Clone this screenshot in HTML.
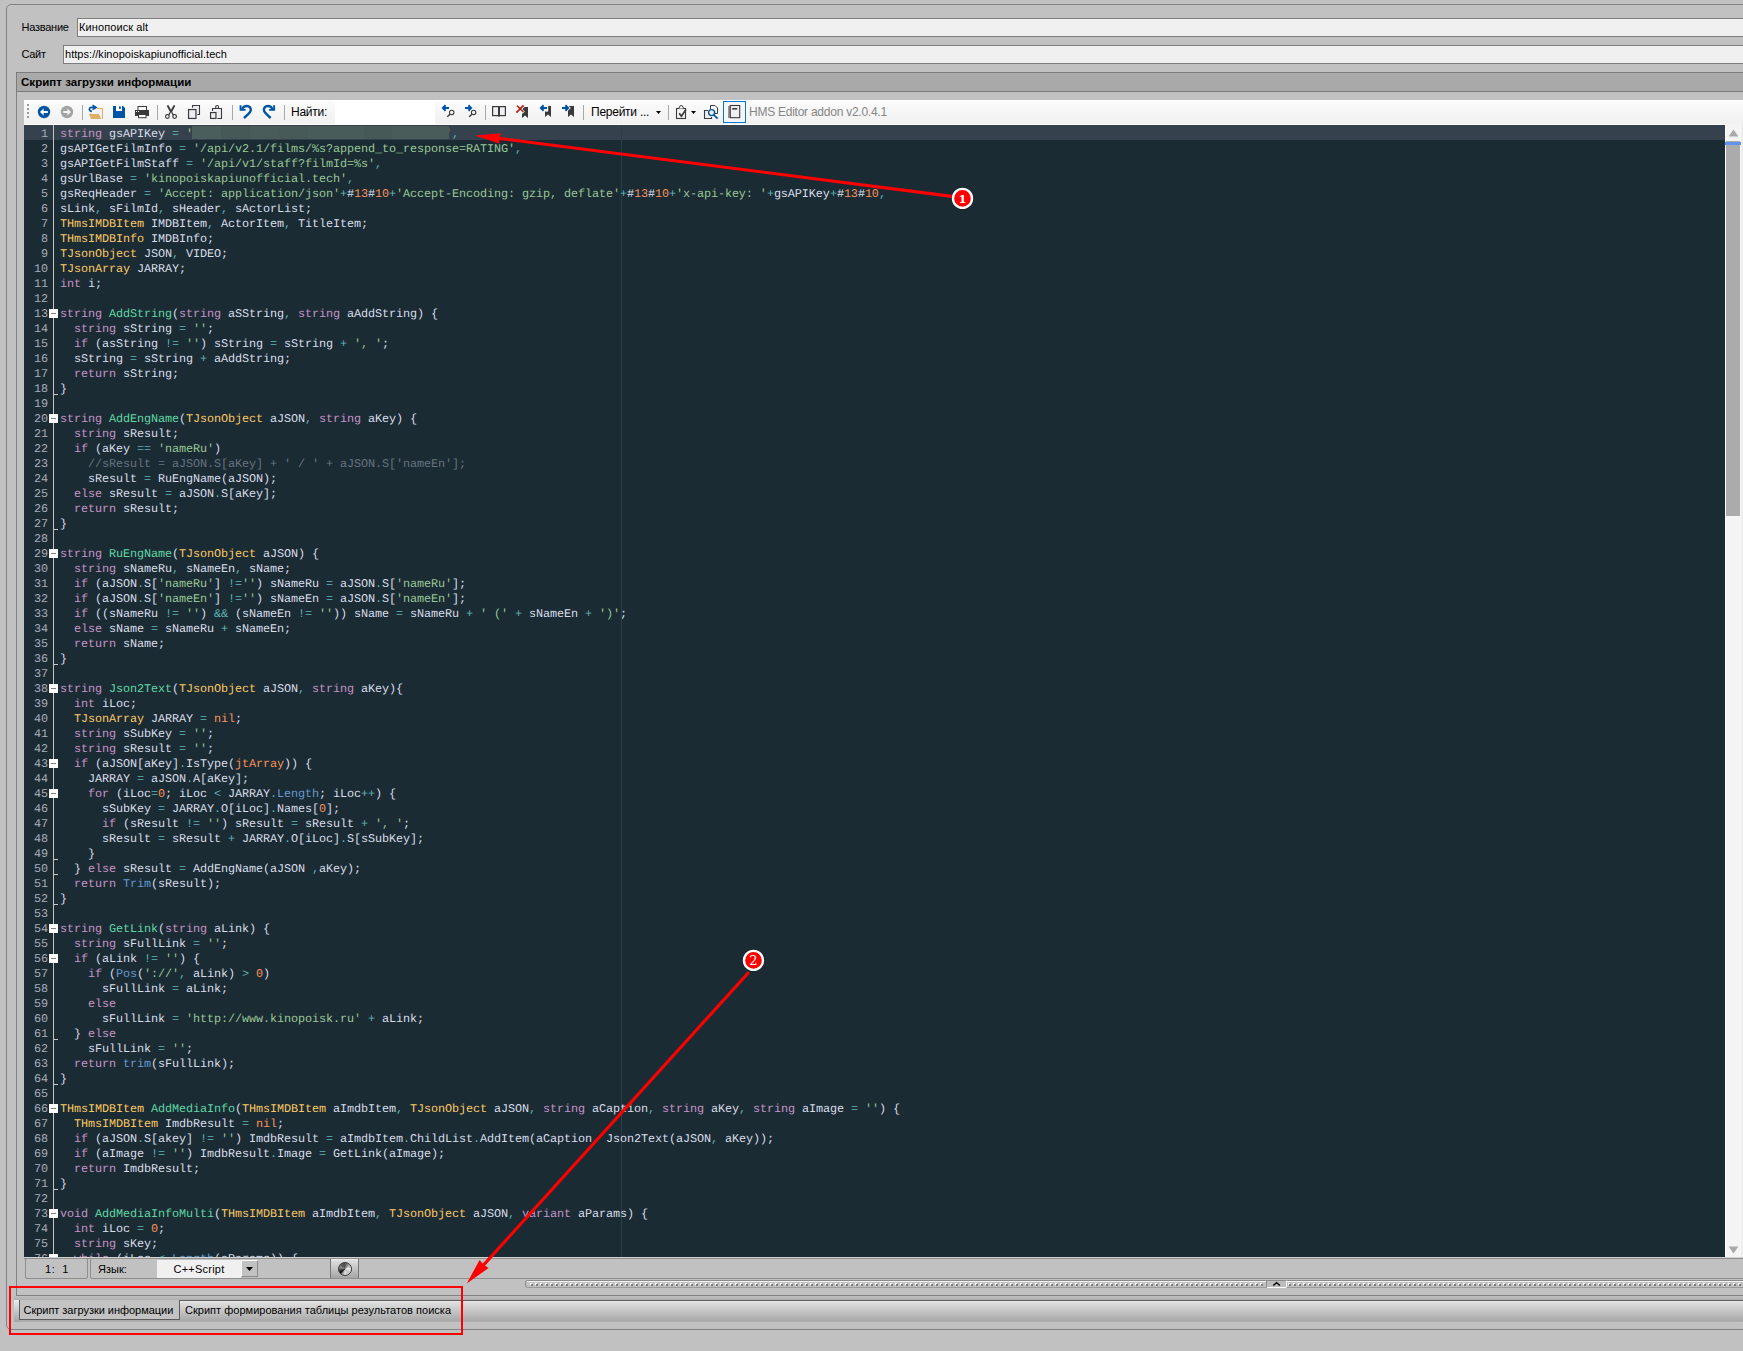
<!DOCTYPE html>
<html lang="ru"><head><meta charset="utf-8"><title>HMS Editor</title>
<style>
html,body{margin:0;padding:0}
body{width:1743px;height:1351px;background:#c1c1c1;position:relative;overflow:hidden;font-family:"Liberation Sans",sans-serif;font-size:11px;color:#000;line-height:13px}
div,span,i,svg{box-sizing:border-box}
.a{position:absolute;white-space:pre}
i{font-style:normal}
.ui{font-size:11px;line-height:13px;color:#000}
.tb{font-size:12px;line-height:14px;color:#000;letter-spacing:-0.25px}
#ed{text-rendering:geometricPrecision;position:absolute;left:24px;top:125px;width:1701px;height:1132px;background:#1b2b34;overflow:hidden;font-family:"Liberation Mono",monospace;font-size:11.8px;letter-spacing:-0.0812px;line-height:15px;color:#d8dee9}
#ed .l{position:absolute;left:36px;height:15px;white-space:pre}
#ed .g{position:absolute;left:0;width:24px;height:15px;text-align:right;color:#a7adba;white-space:pre}
.k{color:#c594c5}.s{color:#99c794}.n{color:#f99157}.o{color:#5fb3b3}.t{color:#fac863}.f{color:#5fd7a5}.b{color:#6699cc}.c{color:#65737e}
.fb{position:absolute;left:25px;width:9px;height:9px;background:#fff}
.fb:after{content:"";position:absolute;left:2px;top:4px;width:5px;height:1px;background:#808080}
.fe{position:absolute;left:30px;width:4px;height:1px;background:#c8c8c8}
</style></head><body>

<div class="a" style="left:6px;top:4px;width:1800px;height:1326px;border:1px solid #828282;border-radius:5px"></div>
<div class="a ui" style="left:21.5px;top:21px;letter-spacing:-0.25px">Название</div>
<div class="a ui" style="left:77px;top:18px;width:1800px;height:19px;background:#f0f0f0;border:1px solid #7e7e7e;padding:2px 0 0 1px;letter-spacing:0.1px">Кинопоиск alt</div>
<div class="a ui" style="left:21.5px;top:48px;letter-spacing:-0.3px">Сайт</div>
<div class="a ui" style="left:63px;top:45px;width:1800px;height:19px;background:#f0f0f0;border:1px solid #7e7e7e;padding:2px 0 0 1px;letter-spacing:0.04px">https://kinopoiskapiunofficial.tech</div>
<div class="a" style="left:16px;top:72px;width:1800px;height:1224px;border:1px solid #808080"></div>
<div class="a" style="left:16px;top:72px;width:1800px;height:20px;background:#a9a9a9;border:1px solid #7c7c7c;font-weight:bold;font-size:11.5px;line-height:14px;padding:2px 0 0 4px;letter-spacing:0.04px">Скрипт загрузки информации</div>
<div class="a" style="left:24px;top:100px;width:1719px;height:25px;background:linear-gradient(#ffffff 0,#fbfbfb 2px,#f1f1f1 23px,#f1f1f1 24px,#ffffff 24px)"></div>
<div class="a" style="left:335px;top:100px;width:100px;height:24px;background:#fff"></div>
<div class="a tb" style="left:291px;top:105px">Найти:</div>
<div class="a tb" style="left:591px;top:105px">Перейти ...</div>
<div class="a tb" style="left:749px;top:105px;color:#858585">HMS Editor addon v2.0.4.1</div>
<div id="ed">
<div class="a" style="left:0;top:0;width:1701px;height:15px;background:#35424d"></div>
<div class="a" style="z-index:2;left:168px;top:1px;width:257px;height:13px;background:linear-gradient(90deg,#4a5e5b 0,#4a5e5b 29px,#465956 29px,#465956 58px,#495c59 58px,#495c59 87px,#475a58 87px,#475a58 116px,#485c59 116px,#485c59 172px,#465957 172px,#465957 200px,#495c5a 200px,#495c5a 257px)"></div>
<div class="a" style="left:597px;top:0;width:1px;height:1132px;background:#2c3d47"></div>
<div class="a" style="left:29px;top:0;width:1px;height:1132px;background:#c4c4c4"></div>
<div class="g" style="top:2px">1</div>
<div class="l" style="top:2px"><i class="k">string</i> gsAPIKey <i class="o">=</i> <i class="s">'                                    '</i><i class="o">,</i></div>
<div class="g" style="top:17px">2</div>
<div class="l" style="top:17px">gsAPIGetFilmInfo <i class="o">=</i> <i class="s">'/api/v2.1/films/%s?append_to_response=RATING'</i><i class="o">,</i></div>
<div class="g" style="top:32px">3</div>
<div class="l" style="top:32px">gsAPIGetFilmStaff <i class="o">=</i> <i class="s">'/api/v1/staff?filmId=%s'</i><i class="o">,</i></div>
<div class="g" style="top:47px">4</div>
<div class="l" style="top:47px">gsUrlBase <i class="o">=</i> <i class="s">'kinopoiskapiunofficial.tech'</i><i class="o">,</i></div>
<div class="g" style="top:62px">5</div>
<div class="l" style="top:62px">gsReqHeader <i class="o">=</i> <i class="s">'Accept: application/json'</i><i class="o">+</i>#<i class="n">13</i>#<i class="n">10</i><i class="o">+</i><i class="s">'Accept-Encoding: gzip, deflate'</i><i class="o">+</i>#<i class="n">13</i>#<i class="n">10</i><i class="o">+</i><i class="s">'x-api-key: '</i><i class="o">+</i>gsAPIKey<i class="o">+</i>#<i class="n">13</i>#<i class="n">10</i><i class="o">,</i></div>
<div class="g" style="top:77px">6</div>
<div class="l" style="top:77px">sLink<i class="o">,</i> sFilmId<i class="o">,</i> sHeader<i class="o">,</i> sActorList;</div>
<div class="g" style="top:92px">7</div>
<div class="l" style="top:92px"><i class="t">THmsIMDBItem</i> IMDBItem<i class="o">,</i> ActorItem<i class="o">,</i> TitleItem;</div>
<div class="g" style="top:107px">8</div>
<div class="l" style="top:107px"><i class="t">THmsIMDBInfo</i> IMDBInfo;</div>
<div class="g" style="top:122px">9</div>
<div class="l" style="top:122px"><i class="t">TJsonObject</i> JSON<i class="o">,</i> VIDEO;</div>
<div class="g" style="top:137px">10</div>
<div class="l" style="top:137px"><i class="t">TJsonArray</i> JARRAY;</div>
<div class="g" style="top:152px">11</div>
<div class="l" style="top:152px"><i class="k">int</i> i;</div>
<div class="g" style="top:167px">12</div>
<div class="g" style="top:182px">13</div>
<div class="l" style="top:182px"><i class="k">string</i> <i class="f">AddString</i>(<i class="k">string</i> aSString<i class="o">,</i> <i class="k">string</i> aAddString) {</div>
<div class="fb" style="top:184px"></div>
<div class="g" style="top:197px">14</div>
<div class="l" style="top:197px">  <i class="k">string</i> sString <i class="o">=</i> <i class="s">''</i>;</div>
<div class="g" style="top:212px">15</div>
<div class="l" style="top:212px">  <i class="k">if</i> (asString <i class="o">!=</i> <i class="s">''</i>) sString <i class="o">=</i> sString <i class="o">+</i> <i class="s">', '</i>;</div>
<div class="g" style="top:227px">16</div>
<div class="l" style="top:227px">  sString <i class="o">=</i> sString <i class="o">+</i> aAddString;</div>
<div class="g" style="top:242px">17</div>
<div class="l" style="top:242px">  <i class="k">return</i> sString;</div>
<div class="g" style="top:257px">18</div>
<div class="l" style="top:257px">}</div>
<div class="fe" style="top:269px"></div>
<div class="g" style="top:272px">19</div>
<div class="g" style="top:287px">20</div>
<div class="l" style="top:287px"><i class="k">string</i> <i class="f">AddEngName</i>(<i class="t">TJsonObject</i> aJSON<i class="o">,</i> <i class="k">string</i> aKey) {</div>
<div class="fb" style="top:289px"></div>
<div class="g" style="top:302px">21</div>
<div class="l" style="top:302px">  <i class="k">string</i> sResult;</div>
<div class="g" style="top:317px">22</div>
<div class="l" style="top:317px">  <i class="k">if</i> (aKey <i class="o">==</i> <i class="s">'nameRu'</i>)</div>
<div class="g" style="top:332px">23</div>
<div class="l" style="top:332px">    <i class="c">//sResult = aJSON.S[aKey] + ' / ' + aJSON.S['nameEn'];</i></div>
<div class="g" style="top:347px">24</div>
<div class="l" style="top:347px">    sResult <i class="o">=</i> RuEngName(aJSON);</div>
<div class="g" style="top:362px">25</div>
<div class="l" style="top:362px">  <i class="k">else</i> sResult <i class="o">=</i> aJSON<i class="o">.</i>S[aKey];</div>
<div class="g" style="top:377px">26</div>
<div class="l" style="top:377px">  <i class="k">return</i> sResult;</div>
<div class="g" style="top:392px">27</div>
<div class="l" style="top:392px">}</div>
<div class="fe" style="top:404px"></div>
<div class="g" style="top:407px">28</div>
<div class="g" style="top:422px">29</div>
<div class="l" style="top:422px"><i class="k">string</i> <i class="f">RuEngName</i>(<i class="t">TJsonObject</i> aJSON) {</div>
<div class="fb" style="top:424px"></div>
<div class="g" style="top:437px">30</div>
<div class="l" style="top:437px">  <i class="k">string</i> sNameRu<i class="o">,</i> sNameEn<i class="o">,</i> sName;</div>
<div class="g" style="top:452px">31</div>
<div class="l" style="top:452px">  <i class="k">if</i> (aJSON<i class="o">.</i>S[<i class="s">'nameRu'</i>] <i class="o">!=</i><i class="s">''</i>) sNameRu <i class="o">=</i> aJSON<i class="o">.</i>S[<i class="s">'nameRu'</i>];</div>
<div class="g" style="top:467px">32</div>
<div class="l" style="top:467px">  <i class="k">if</i> (aJSON<i class="o">.</i>S[<i class="s">'nameEn'</i>] <i class="o">!=</i><i class="s">''</i>) sNameEn <i class="o">=</i> aJSON<i class="o">.</i>S[<i class="s">'nameEn'</i>];</div>
<div class="g" style="top:482px">33</div>
<div class="l" style="top:482px">  <i class="k">if</i> ((sNameRu <i class="o">!=</i> <i class="s">''</i>) <i class="o">&amp;&amp;</i> (sNameEn <i class="o">!=</i> <i class="s">''</i>)) sName <i class="o">=</i> sNameRu <i class="o">+</i> <i class="s">' ('</i> <i class="o">+</i> sNameEn <i class="o">+</i> <i class="s">')'</i>;</div>
<div class="g" style="top:497px">34</div>
<div class="l" style="top:497px">  <i class="k">else</i> sName <i class="o">=</i> sNameRu <i class="o">+</i> sNameEn;</div>
<div class="g" style="top:512px">35</div>
<div class="l" style="top:512px">  <i class="k">return</i> sName;</div>
<div class="g" style="top:527px">36</div>
<div class="l" style="top:527px">}</div>
<div class="fe" style="top:539px"></div>
<div class="g" style="top:542px">37</div>
<div class="g" style="top:557px">38</div>
<div class="l" style="top:557px"><i class="k">string</i> <i class="f">Json2Text</i>(<i class="t">TJsonObject</i> aJSON<i class="o">,</i> <i class="k">string</i> aKey){</div>
<div class="fb" style="top:559px"></div>
<div class="g" style="top:572px">39</div>
<div class="l" style="top:572px">  <i class="k">int</i> iLoc;</div>
<div class="g" style="top:587px">40</div>
<div class="l" style="top:587px">  <i class="t">TJsonArray</i> JARRAY <i class="o">=</i> <i class="n">nil</i>;</div>
<div class="g" style="top:602px">41</div>
<div class="l" style="top:602px">  <i class="k">string</i> sSubKey <i class="o">=</i> <i class="s">''</i>;</div>
<div class="g" style="top:617px">42</div>
<div class="l" style="top:617px">  <i class="k">string</i> sResult <i class="o">=</i> <i class="s">''</i>;</div>
<div class="g" style="top:632px">43</div>
<div class="l" style="top:632px">  <i class="k">if</i> (aJSON[aKey]<i class="o">.</i>IsType(<i class="n">jtArray</i>)) {</div>
<div class="fb" style="top:634px"></div>
<div class="g" style="top:647px">44</div>
<div class="l" style="top:647px">    JARRAY <i class="o">=</i> aJSON<i class="o">.</i>A[aKey];</div>
<div class="g" style="top:662px">45</div>
<div class="l" style="top:662px">    <i class="k">for</i> (iLoc<i class="o">=</i><i class="n">0</i>; iLoc <i class="o">&lt;</i> JARRAY<i class="o">.</i><i class="b">Length</i>; iLoc<i class="o">++</i>) {</div>
<div class="fb" style="top:664px"></div>
<div class="g" style="top:677px">46</div>
<div class="l" style="top:677px">      sSubKey <i class="o">=</i> JARRAY<i class="o">.</i>O[iLoc]<i class="o">.</i>Names[<i class="n">0</i>];</div>
<div class="g" style="top:692px">47</div>
<div class="l" style="top:692px">      <i class="k">if</i> (sResult <i class="o">!=</i> <i class="s">''</i>) sResult <i class="o">=</i> sResult <i class="o">+</i> <i class="s">', '</i>;</div>
<div class="g" style="top:707px">48</div>
<div class="l" style="top:707px">      sResult <i class="o">=</i> sResult <i class="o">+</i> JARRAY<i class="o">.</i>O[iLoc]<i class="o">.</i>S[sSubKey];</div>
<div class="g" style="top:722px">49</div>
<div class="l" style="top:722px">    }</div>
<div class="fe" style="top:734px"></div>
<div class="g" style="top:737px">50</div>
<div class="l" style="top:737px">  } <i class="k">else</i> sResult <i class="o">=</i> AddEngName(aJSON <i class="o">,</i>aKey);</div>
<div class="fe" style="top:749px"></div>
<div class="g" style="top:752px">51</div>
<div class="l" style="top:752px">  <i class="k">return</i> <i class="b">Trim</i>(sResult);</div>
<div class="g" style="top:767px">52</div>
<div class="l" style="top:767px">}</div>
<div class="fe" style="top:779px"></div>
<div class="g" style="top:782px">53</div>
<div class="g" style="top:797px">54</div>
<div class="l" style="top:797px"><i class="k">string</i> <i class="f">GetLink</i>(<i class="k">string</i> aLink) {</div>
<div class="fb" style="top:799px"></div>
<div class="g" style="top:812px">55</div>
<div class="l" style="top:812px">  <i class="k">string</i> sFullLink <i class="o">=</i> <i class="s">''</i>;</div>
<div class="g" style="top:827px">56</div>
<div class="l" style="top:827px">  <i class="k">if</i> (aLink <i class="o">!=</i> <i class="s">''</i>) {</div>
<div class="fb" style="top:829px"></div>
<div class="g" style="top:842px">57</div>
<div class="l" style="top:842px">    <i class="k">if</i> (<i class="b">Pos</i>(<i class="s">'://'</i><i class="o">,</i> aLink) <i class="o">&gt;</i> <i class="n">0</i>)</div>
<div class="g" style="top:857px">58</div>
<div class="l" style="top:857px">      sFullLink <i class="o">=</i> aLink;</div>
<div class="g" style="top:872px">59</div>
<div class="l" style="top:872px">    <i class="k">else</i></div>
<div class="g" style="top:887px">60</div>
<div class="l" style="top:887px">      sFullLink <i class="o">=</i> <i class="s">'http://www.kinopoisk.ru'</i> <i class="o">+</i> aLink;</div>
<div class="g" style="top:902px">61</div>
<div class="l" style="top:902px">  } <i class="k">else</i></div>
<div class="fe" style="top:914px"></div>
<div class="g" style="top:917px">62</div>
<div class="l" style="top:917px">    sFullLink <i class="o">=</i> <i class="s">''</i>;</div>
<div class="g" style="top:932px">63</div>
<div class="l" style="top:932px">  <i class="k">return</i> <i class="b">trim</i>(sFullLink);</div>
<div class="g" style="top:947px">64</div>
<div class="l" style="top:947px">}</div>
<div class="fe" style="top:959px"></div>
<div class="g" style="top:962px">65</div>
<div class="g" style="top:977px">66</div>
<div class="l" style="top:977px"><i class="t">THmsIMDBItem</i> <i class="f">AddMediaInfo</i>(<i class="t">THmsIMDBItem</i> aImdbItem<i class="o">,</i> <i class="t">TJsonObject</i> aJSON<i class="o">,</i> <i class="k">string</i> aCaption<i class="o">,</i> <i class="k">string</i> aKey<i class="o">,</i> <i class="k">string</i> aImage <i class="o">=</i> <i class="s">''</i>) {</div>
<div class="fb" style="top:979px"></div>
<div class="g" style="top:992px">67</div>
<div class="l" style="top:992px">  <i class="t">THmsIMDBItem</i> ImdbResult <i class="o">=</i> <i class="n">nil</i>;</div>
<div class="g" style="top:1007px">68</div>
<div class="l" style="top:1007px">  <i class="k">if</i> (aJSON<i class="o">.</i>S[akey] <i class="o">!=</i> <i class="s">''</i>) ImdbResult <i class="o">=</i> aImdbItem<i class="o">.</i>ChildList<i class="o">.</i>AddItem(aCaption<i class="o">,</i> Json2Text(aJSON<i class="o">,</i> aKey));</div>
<div class="g" style="top:1022px">69</div>
<div class="l" style="top:1022px">  <i class="k">if</i> (aImage <i class="o">!=</i> <i class="s">''</i>) ImdbResult<i class="o">.</i>Image <i class="o">=</i> GetLink(aImage);</div>
<div class="g" style="top:1037px">70</div>
<div class="l" style="top:1037px">  <i class="k">return</i> ImdbResult;</div>
<div class="g" style="top:1052px">71</div>
<div class="l" style="top:1052px">}</div>
<div class="fe" style="top:1064px"></div>
<div class="g" style="top:1067px">72</div>
<div class="g" style="top:1082px">73</div>
<div class="l" style="top:1082px"><i class="k">void</i> <i class="f">AddMediaInfoMulti</i>(<i class="t">THmsIMDBItem</i> aImdbItem<i class="o">,</i> <i class="t">TJsonObject</i> aJSON<i class="o">,</i> <i class="k">variant</i> aParams) {</div>
<div class="fb" style="top:1084px"></div>
<div class="g" style="top:1097px">74</div>
<div class="l" style="top:1097px">  <i class="k">int</i> iLoc <i class="o">=</i> <i class="n">0</i>;</div>
<div class="g" style="top:1112px">75</div>
<div class="l" style="top:1112px">  <i class="k">string</i> sKey;</div>
<div class="g" style="top:1127px">76</div>
<div class="l" style="top:1127px">  <i class="k">while</i> (iLoc <i class="o">&lt;</i> <i class="b">Length</i>(aParams)) {</div>
<div class="fb" style="top:1129px"></div>
</div>
<div class="a" style="left:1725px;top:124px;width:18px;height:1133px;background:linear-gradient(90deg,#fff 0,#fff 1px,#f4f4f4 1px,#f4f4f4 15px,#f8f8f8 15px,#f8f8f8 16px,#eee 16px)"></div>
<div class="a" style="left:1726px;top:141px;width:14px;height:375px;background:#ababab"></div>
<div class="a" style="left:1725px;top:142px;width:16px;height:3px;background:#6495ed"></div>
<div class="a" style="left:24px;top:1257px;width:1800px;height:1px;background:#d2d2d2"></div>
<div class="a" style="left:24px;top:1258px;width:1800px;height:1px;background:#8a8a8a"></div>
<div class="a ui" style="left:25px;top:1258px;width:63px;height:21px;border:1px solid #8e8e8e;border-radius:2px;text-align:center;padding:4px 0 0 1px;letter-spacing:0.5px">1:  1</div>
<div class="a" style="left:90px;top:1258px;width:1800px;height:21px;border:1px solid #8e8e8e;border-radius:2px 0 0 2px"></div>
<div class="a ui" style="left:98px;top:1263px">Язык:</div>
<div class="a ui" style="left:157px;top:1260px;width:84px;height:18px;background:#f0f0f0;text-align:center;padding-top:3px;letter-spacing:0.22px">C++Script</div>
<div class="a" style="left:241px;top:1260px;width:17px;height:17px;background:#c1c1c1;border:1px solid;border-color:#fff #8a8a8a #8a8a8a #fff"></div>
<div class="a" style="left:330px;top:1259px;width:29px;height:19px;background:linear-gradient(#ececec 0,#dcdcdc 2px,#a6a6a6 100%);border-left:1px solid #767676;border-right:1px solid #767676"></div>
<div class="a" style="left:338px;top:1262px;width:14px;height:14px;border-radius:50%;border:1px solid #3a3a3a;background:conic-gradient(from 0deg,#505050 0deg,#a8a8a8 45deg,#ececec 85deg,#c4c4c4 135deg,#dcdcdc 185deg,#8a8a8a 212deg,#0c0c0c 232deg,#3c3c3c 255deg,#8c8c8c 290deg,#5a5a5a 320deg,#505050 360deg)"></div>
<div class="a" style="left:525px;top:1280px;width:742px;height:8px;border:1px solid #8c8c8c;border-bottom-color:#9a9a9a;border-radius:3px 0 0 3px"></div>
<div class="a" style="left:527px;top:1281px;width:739px;height:1px;background:#f4f4f4"></div>
<div class="a" style="left:530px;top:1283px;width:733px;height:3px;background:linear-gradient(90deg,transparent 0,transparent 1px,#7c7c7c 1px,#7c7c7c 3px,transparent 3px) 0 1px/5px 2px repeat-x,linear-gradient(90deg,#fff 0,#fff 2px,transparent 2px) 0 0/5px 2px repeat-x"></div>
<div class="a" style="left:1267px;top:1280px;width:19px;height:8px;background:#bcbcbc;border-top:1px solid #8c8c8c;border-bottom:1px solid #fafafa"></div>
<div class="a" style="left:1286px;top:1280px;width:600px;height:8px;border-top:1px solid #8c8c8c;border-left:1px solid #fafafa;border-bottom:1px solid #9a9a9a"></div>
<div class="a" style="left:1286px;top:1281px;width:600px;height:1px;background:#f4f4f4"></div>
<div class="a" style="left:1288px;top:1283px;width:455px;height:3px;background:linear-gradient(90deg,transparent 0,transparent 1px,#7c7c7c 1px,#7c7c7c 3px,transparent 3px) 0 1px/5px 2px repeat-x,linear-gradient(90deg,#fff 0,#fff 2px,transparent 2px) 0 0/5px 2px repeat-x"></div>
<div class="a" style="left:14px;top:1296px;width:1800px;height:4px;background:linear-gradient(#c0c0c0,#aeaeae)"></div>
<div class="a" style="left:14px;top:1300px;width:1800px;height:22px;background:linear-gradient(#5e5e5e 0,#5e5e5e 1px,#f0f0f0 1px,#e0e0e0 2px,#c8c8c8 10px,#a8a8a8 21px,#b4b4b4 22px)"></div>
<div class="a" style="left:14px;top:1300px;width:6px;height:22px;background:linear-gradient(#ececec,#a4a4a4)"></div>
<div class="a ui" style="left:19px;top:1300px;width:161px;height:20px;background:#c3c3c3;border:1px solid #5c5c5c;border-top:0;padding:4px 0 0 3.5px;letter-spacing:-0.03px">Скрипт загрузки информации</div>
<div class="a ui" style="left:185px;top:1304px;letter-spacing:0.02px">Скрипт формирования таблицы результатов поиска</div>
<svg class="a" style="left:0;top:0" width="1743" height="1351" viewBox="0 0 1743 1351">
<rect x="27" y="104" width="2" height="2" fill="#9a9a9a"/>
<rect x="27" y="108" width="2" height="2" fill="#9a9a9a"/>
<rect x="27" y="112" width="2" height="2" fill="#9a9a9a"/>
<rect x="27" y="116" width="2" height="2" fill="#9a9a9a"/>
<rect x="82" y="105" width="1" height="15" fill="#a8a8a8"/>
<rect x="157" y="105" width="1" height="15" fill="#a8a8a8"/>
<rect x="232" y="105" width="1" height="15" fill="#a8a8a8"/>
<rect x="284" y="105" width="1" height="15" fill="#a8a8a8"/>
<rect x="485" y="105" width="1" height="15" fill="#a8a8a8"/>
<rect x="583" y="105" width="1" height="15" fill="#a8a8a8"/>
<rect x="668" y="105" width="1" height="15" fill="#a8a8a8"/>
<circle cx="44" cy="112" r="6.2" fill="#0054a6"/>
<path d="M40 112 L43.6 108.6 L43.6 111.1 L47.8 111.1 L47.8 112.9 L43.6 112.9 L43.6 115.4 Z" fill="#fff"/>
<circle cx="67" cy="112" r="6.2" fill="#a3a3a3"/>
<path d="M71 112 L67.4 108.6 L67.4 111.1 L63.2 111.1 L63.2 112.9 L67.4 112.9 L67.4 115.4 Z" fill="#f2f2f2"/>
<path d="M97 108.5 H102.5 V119" fill="none" stroke="#deb068" stroke-width="1"/>
<rect x="95" y="109" width="7" height="5" fill="#f0f0f5"/>
<path d="M89 114 H98.8 L101.3 119 H91 Z" fill="#deb068"/>
<path d="M91.9 111.4 C88.7 111 88.5 107.4 91.8 107.4 H95.4" fill="none" stroke="#0054a6" stroke-width="1.7"/>
<path d="M92.5 105.2 L96 107.4 L92.5 109.6" fill="none" stroke="#0054a6" stroke-width="1.7"/>
<path d="M90 114 L90.6 112.9 L91.4 114 Z" fill="#deb068"/>
<path d="M113 106 H123 L125 108 V118 H113 Z" fill="#0054a6"/>
<rect x="116" y="106" width="6" height="5" fill="#fff"/>
<rect x="119" y="106.4" width="1.8" height="2.5" fill="#0054a6"/>
<rect x="138" y="106.5" width="8.5" height="4" fill="#fff" stroke="#3a3a3a" stroke-width="1"/>
<rect x="135" y="110" width="14" height="6" fill="#3a3a3a"/>
<rect x="136" y="111" width="1" height="1" fill="#fff"/><rect x="138" y="111" width="1" height="1" fill="#fff"/>
<rect x="138.5" y="114.5" width="7.5" height="3.2" fill="#fff" stroke="#3a3a3a" stroke-width="1"/>
<path d="M167.5 105.4 L171 111.8 M174.5 105.4 L171 111.8" fill="none" stroke="#3a3a3a" stroke-width="1.9"/>
<path d="M171 111.4 L168.7 114.9 M171 111.4 L173.3 114.9" fill="none" stroke="#3a3a3a" stroke-width="1.3"/>
<circle cx="167.4" cy="116.5" r="1.85" fill="#fff" stroke="#3a3a3a" stroke-width="1.2"/><circle cx="174.6" cy="116.5" r="1.85" fill="#fff" stroke="#3a3a3a" stroke-width="1.2"/>
<rect x="170.6" y="112.6" width="0.9" height="0.9" fill="#fff"/>
<rect x="193" y="106" width="6" height="8" fill="#eeeef3"/>
<path d="M192.5 107.8 V105.5 H199.5 V114.5 H197.3" fill="none" stroke="#3a3a3a" stroke-width="1.1" stroke-linejoin="miter"/>
<rect x="188.55" y="109.55" width="7.4" height="8.9" fill="#eeeef3" stroke="#3a3a3a" stroke-width="1.2"/>
<rect x="213" y="109" width="8" height="9" fill="#eeeef3"/>
<path d="M212.5 111 V108.5 H221.5 V118.5 H217.4" fill="none" stroke="#3a3a3a" stroke-width="1.1" stroke-linejoin="miter"/>
<circle cx="217.1" cy="107" r="1.5" fill="#fff" stroke="#3a3a3a" stroke-width="1.1"/>
<rect x="210.55" y="112.55" width="5.4" height="5.9" fill="#eeeef3" stroke="#3a3a3a" stroke-width="1.2"/>
<g fill="none" stroke="#0054a6"><path d="M242 109 C243.6 106.8 246.4 105.6 248.6 106.4 C251 107.3 251.5 110.3 249.7 112.6 C248.4 114.2 246.4 116 244 118" stroke-width="2.4"/><path d="M240.55 105.2 V109.9 H245.6" stroke-width="1.9"/></g>
<g transform="translate(514.7 0) scale(-1 1)" fill="none" stroke="#0054a6"><path d="M242 109 C243.6 106.8 246.4 105.6 248.6 106.4 C251 107.3 251.5 110.3 249.7 112.6 C248.4 114.2 246.4 116 244 118" stroke-width="2.4"/><path d="M240.55 105.2 V109.9 H245.6" stroke-width="1.9"/></g>
<path d="M445.6 105.2 L442.9 108 L445.6 110.8" fill="none" stroke="#0054a6" stroke-width="2"/><path d="M443.6 108 H449" stroke="#0054a6" stroke-width="2"/>
<circle cx="451.7" cy="112.4" r="2.2" fill="#f8f8f8" stroke="#3a3a3a" stroke-width="1.1"/><path d="M450.0 114.2 L447.3 116.80000000000001" stroke="#3a3a3a" stroke-width="1.5"/>
<path d="M468.4 105.2 L471.1 108 L468.4 110.8" fill="none" stroke="#0054a6" stroke-width="2"/><path d="M465 108 H470.4" stroke="#0054a6" stroke-width="2"/>
<circle cx="473.6" cy="112.4" r="2.2" fill="#f8f8f8" stroke="#3a3a3a" stroke-width="1.1"/><path d="M471.90000000000003 114.2 L469.20000000000005 116.80000000000001" stroke="#3a3a3a" stroke-width="1.5"/>
<rect x="492.6" y="106.6" width="12.8" height="9" fill="#eeeef3" stroke="#3a3a3a" stroke-width="1.2"/><rect x="498" y="106" width="2" height="10.6" fill="#3a3a3a"/>
<path d="M522 107 H528 V118 L525.0 115.4 L522 118 Z" fill="#3a3a3a"/>
<path d="M516.6 105.6 L523.6 112.6 M523.6 105.6 L516.6 112.6" stroke="#fff" stroke-width="3.4"/>
<path d="M517 105.6 L523.4 112" stroke="#b3291a" stroke-width="1.5"/><path d="M523.6 105.4 L516.4 112.6" stroke="#b3291a" stroke-width="2"/>
<path d="M545 106 H551 V117 L548.0 114.4 L545 117 Z" fill="#3a3a3a"/>
<rect x="540" y="104" width="8.2" height="7.6" fill="#fbfbfb"/>
<path d="M543.6 105.2 L540.9 108 L543.6 110.8" fill="none" stroke="#0054a6" stroke-width="2"/><path d="M541.6 108 H547" stroke="#0054a6" stroke-width="2"/>
<path d="M568 106 H574 V117 L571.0 114.4 L568 117 Z" fill="#3a3a3a"/>
<path d="M566 103.6 L570.8 108 L566 112.4 Z" fill="#fbfbfb"/>
<path d="M565.4 105.2 L568.1 108 L565.4 110.8" fill="none" stroke="#0054a6" stroke-width="2"/><path d="M562 108 H567.4" stroke="#0054a6" stroke-width="2"/>
<path d="M656 111 H661 L658.5 114 Z" fill="#000"/><path d="M691 111 H696 L693.5 114 Z" fill="#000"/>
<rect x="676.5" y="108.5" width="9" height="10" fill="#f4f4f6" stroke="#3a3a3a" stroke-width="1.1"/>
<path d="M678.8 108.4 L680.2 105.7 H682.2 L683.6 108.4" fill="#fff" stroke="#3a3a3a" stroke-width="1"/>
<path d="M679.2 113.2 L681.4 116.2 L686 109.6" fill="none" stroke="#3a3a3a" stroke-width="1.7"/>
<path d="M710.5 109 V105.5 H715 L717.5 108 V113.5 H715" fill="#f6f6f8" stroke="#3a3a3a" stroke-width="1"/>
<path d="M708 110.5 H704.5 V118.5 H711.5 V117" fill="#eeeef3" stroke="#3a3a3a" stroke-width="1.1"/>
<circle cx="711.6" cy="112.6" r="3" fill="#eef0f4" stroke="#0054a6" stroke-width="1.4"/><path d="M713.8 114.9 L717.6 118.6" stroke="#0054a6" stroke-width="1.7"/>
<rect x="723.5" y="101.5" width="22" height="21" fill="#f6f6f6" stroke="#0078d7" stroke-width="1"/>
<rect x="730.3" y="105.5" width="9.4" height="12.2" fill="#eeeef3" stroke="#3a3a3a" stroke-width="1.1"/>
<rect x="728" y="106.5" width="2" height="1" fill="#3a3a3a"/>
<rect x="728" y="108.5" width="2" height="1" fill="#3a3a3a"/>
<rect x="728" y="110.5" width="2" height="1" fill="#3a3a3a"/>
<rect x="728" y="112.5" width="2" height="1" fill="#3a3a3a"/>
<rect x="728" y="114.5" width="2" height="1" fill="#3a3a3a"/>
<rect x="728" y="116.5" width="2" height="1" fill="#3a3a3a"/>
<rect x="732.2" y="108" width="5" height="1.6" fill="#3a3a3a"/>
<path d="M1733.5 129.6 L1738.4 136.6 H1728.6 Z" fill="#a9a9a9"/>
<path d="M1733.5 1253.6 L1738.4 1246.4 H1728.6 Z" fill="#a9a9a9"/>
<path d="M246 1267 H253 L249.5 1271 Z" fill="#000"/>
<path d="M1273.3 1285.5 L1276.6 1282.6 L1279.9 1285.5" fill="none" stroke="#000" stroke-width="1.4"/>
<rect x="10" y="1287" width="452" height="47" fill="none" stroke="#ff0000" stroke-width="2"/>
<path d="M952 196.4 L497 138.1" stroke="#ff0000" stroke-width="3.1" fill="none"/>
<path d="M474.8 135.6 L501.2 133.2 L498.6 138.4 L500 143.8 Z" fill="#ff0000"/>
<path d="M747.9 973.2 L483 1265.6" stroke="#ff0000" stroke-width="3.1" stroke-linecap="round" fill="none"/>
<path d="M466.8 1283.4 L479.6 1260 L483.4 1264.6 L488.6 1268 Z" fill="#ff0000"/>
<circle cx="962.5" cy="198.4" r="11.4" fill="#000" opacity=".18"/>
<circle cx="962.5" cy="198.4" r="9.5" fill="#ff0000" stroke="#fff" stroke-width="2.4"/>
<text x="962.5" y="203.1" text-anchor="middle" style="font-family:'DejaVu Serif','Liberation Serif',serif;font-size:11.5px;font-weight:bold" fill="#fff">1</text>
<circle cx="753.5" cy="960.4" r="11.4" fill="#000" opacity=".18"/>
<circle cx="753.5" cy="960.4" r="9.5" fill="#ff0000" stroke="#fff" stroke-width="2.4"/>
<text x="753.5" y="965.1" text-anchor="middle" style="font-family:'DejaVu Serif','Liberation Serif',serif;font-size:13px" fill="#fff">2</text>
</svg>
</body></html>
